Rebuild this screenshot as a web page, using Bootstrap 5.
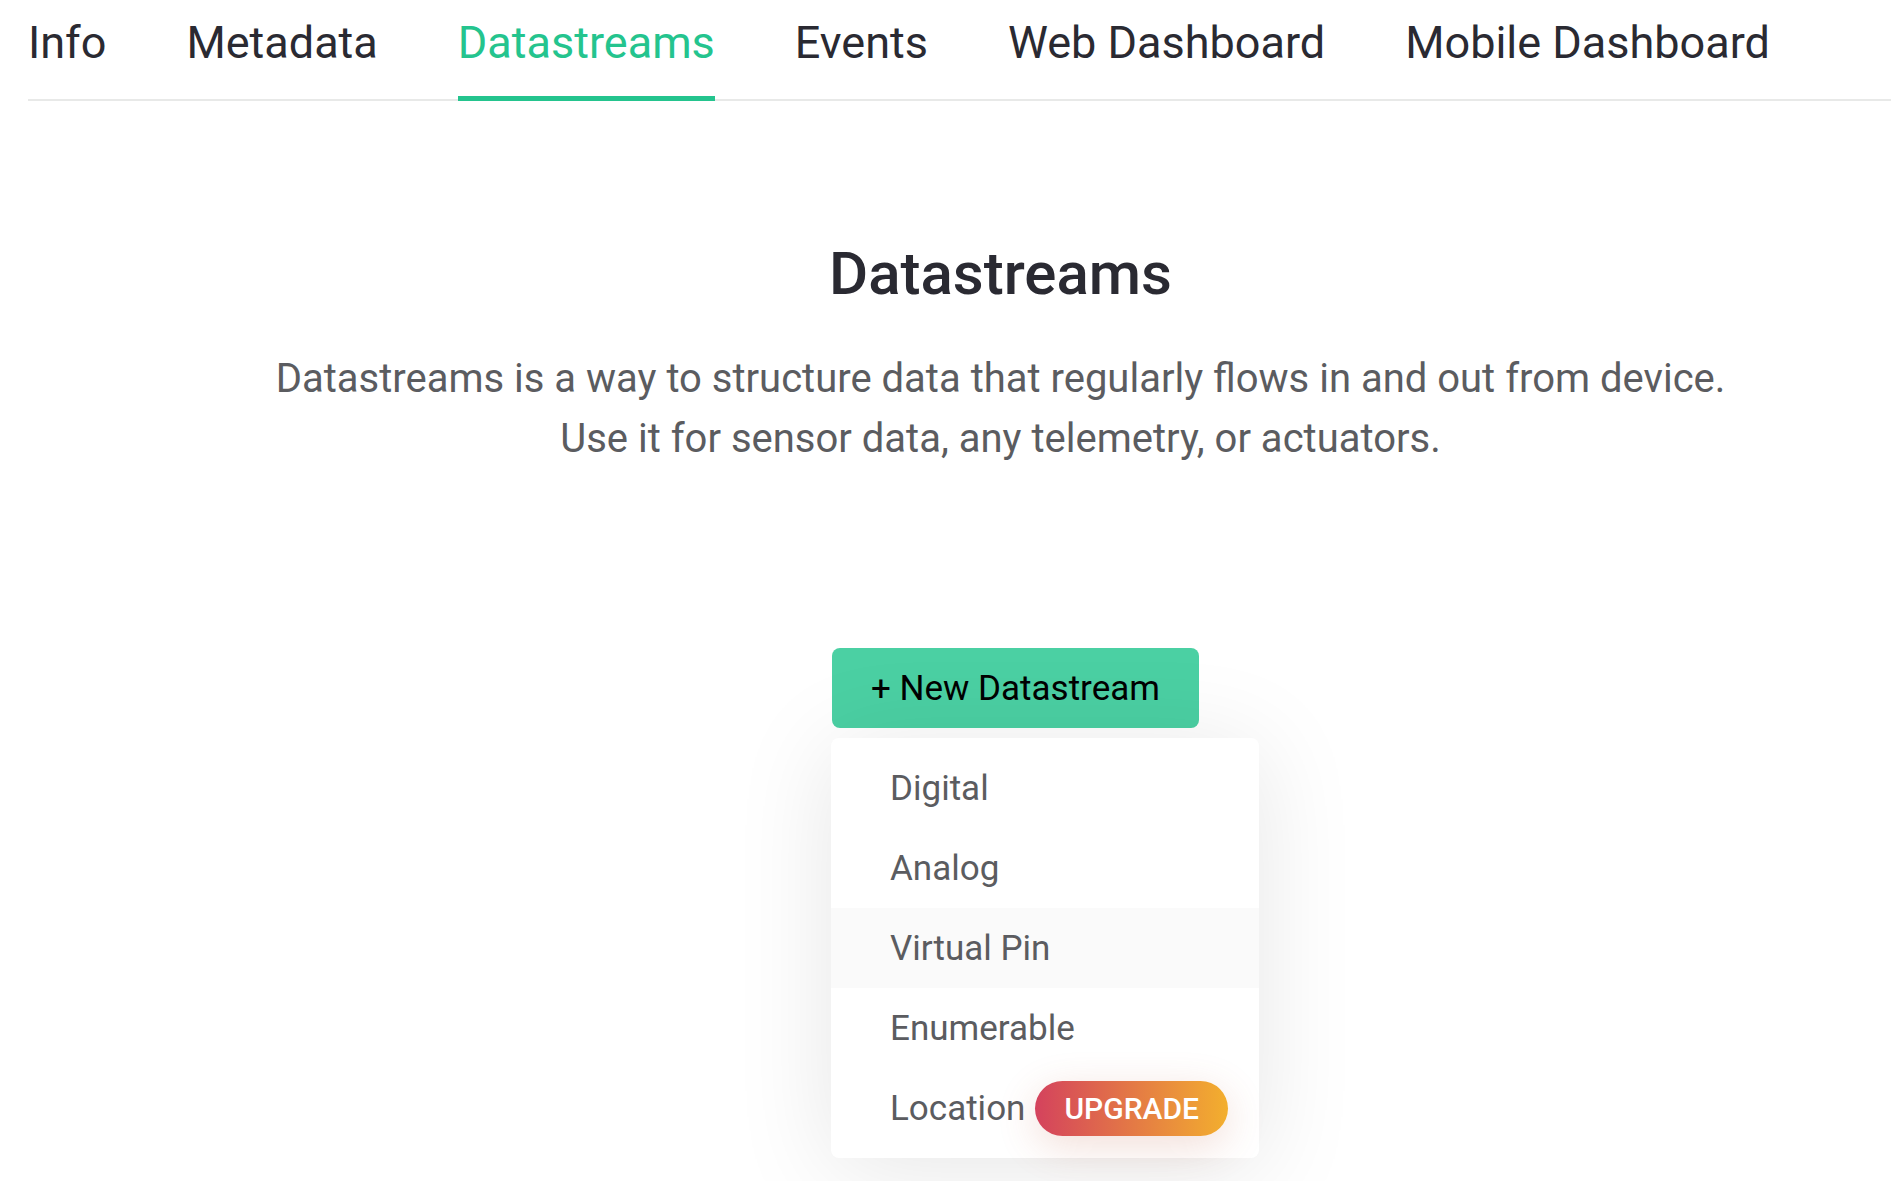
<!DOCTYPE html>
<html lang="en">
<head>
<meta charset="utf-8">
<meta name="viewport" content="width=device-width, initial-scale=1">
<title>Datastreams</title>
<link href="https://cdn.jsdelivr.net/npm/bootstrap@5.3.0/dist/css/bootstrap.min.css" rel="stylesheet">
<style>
body{font-family:Roboto,"Liberation Sans",sans-serif;color:#2a2a32;background:#fff;min-height:100vh;overflow-x:hidden}
.tab-bar{margin-left:28px;height:101px;gap:80px;border-bottom:2px solid #e8e9e8}
.tab-bar .nav-link{height:101px;padding:9px 0 0;font-size:45px;line-height:68px;color:#2a2a32;border-bottom:5px solid transparent;white-space:nowrap}
.tab-bar .nav-link.active{color:#24c48e;border-bottom-color:#24c48e}
.page-body{padding:136px 0 22px 110px}
.intro h1{font-size:60px;line-height:74px;font-weight:500;margin:0 0 38px}
.intro p{font-size:40px;line-height:60px;color:#5b5c60;margin:0}
.create{margin-top:179px;width:339px}
.btn-new{width:367px;height:80px;margin-left:1px;padding:0;border:0;border-radius:8px;background:#4bd0a3;color:#000;font-size:35px;line-height:82px}
.btn-new:hover{background:#4bd0a3;color:#000}
.type-menu{width:428px;margin:10px 0 0;padding:10px 0;list-style:none;background:#fff;border-radius:8px;box-shadow:0 10px 100px rgba(0,0,0,.1)}
.type-menu a{height:80px;padding:1px 0 0 59px;gap:10px;font-size:35px;line-height:80px;color:#5b5c60;text-decoration:none}
.type-menu a.hovered{background:#fafafa}
.upgrade{height:55px;padding:0 29px;line-height:55px;border-radius:28px;font-size:30px;font-weight:500;color:#fff;background:linear-gradient(90deg,#d4425d,#f3af2e);box-shadow:0 10px 40px rgba(190,90,60,.2)}
</style>
</head>
<body>
<nav class="nav flex-nowrap tab-bar" aria-label="Template sections">
<a class="nav-link" href="#">Info</a>
<a class="nav-link" href="#">Metadata</a>
<a class="nav-link active" aria-current="page" href="#">Datastreams</a>
<a class="nav-link" href="#">Events</a>
<a class="nav-link" href="#">Web Dashboard</a>
<a class="nav-link" href="#">Mobile Dashboard</a>
</nav>
<main class="page-body">
<section class="intro text-center">
<h1>Datastreams</h1>
<p>Datastreams is a way to structure data that regularly flows in and out from device.<br>Use it for sensor data, any telemetry, or actuators.</p>
</section>
<div class="create mx-auto">
<button type="button" class="btn btn-new d-block" aria-expanded="true">+ New Datastream</button>
<ul class="type-menu position-relative">
<li><a class="d-flex align-items-center" href="#">Digital</a></li>
<li><a class="d-flex align-items-center" href="#">Analog</a></li>
<li><a class="d-flex align-items-center hovered" href="#">Virtual Pin</a></li>
<li><a class="d-flex align-items-center" href="#">Enumerable</a></li>
<li><a class="d-flex align-items-center" href="#">Location <span class="upgrade">UPGRADE</span></a></li>
</ul>
</div>
</main>
<script src="https://cdn.jsdelivr.net/npm/bootstrap@5.3.0/dist/js/bootstrap.bundle.min.js"></script>
</body>
</html>
